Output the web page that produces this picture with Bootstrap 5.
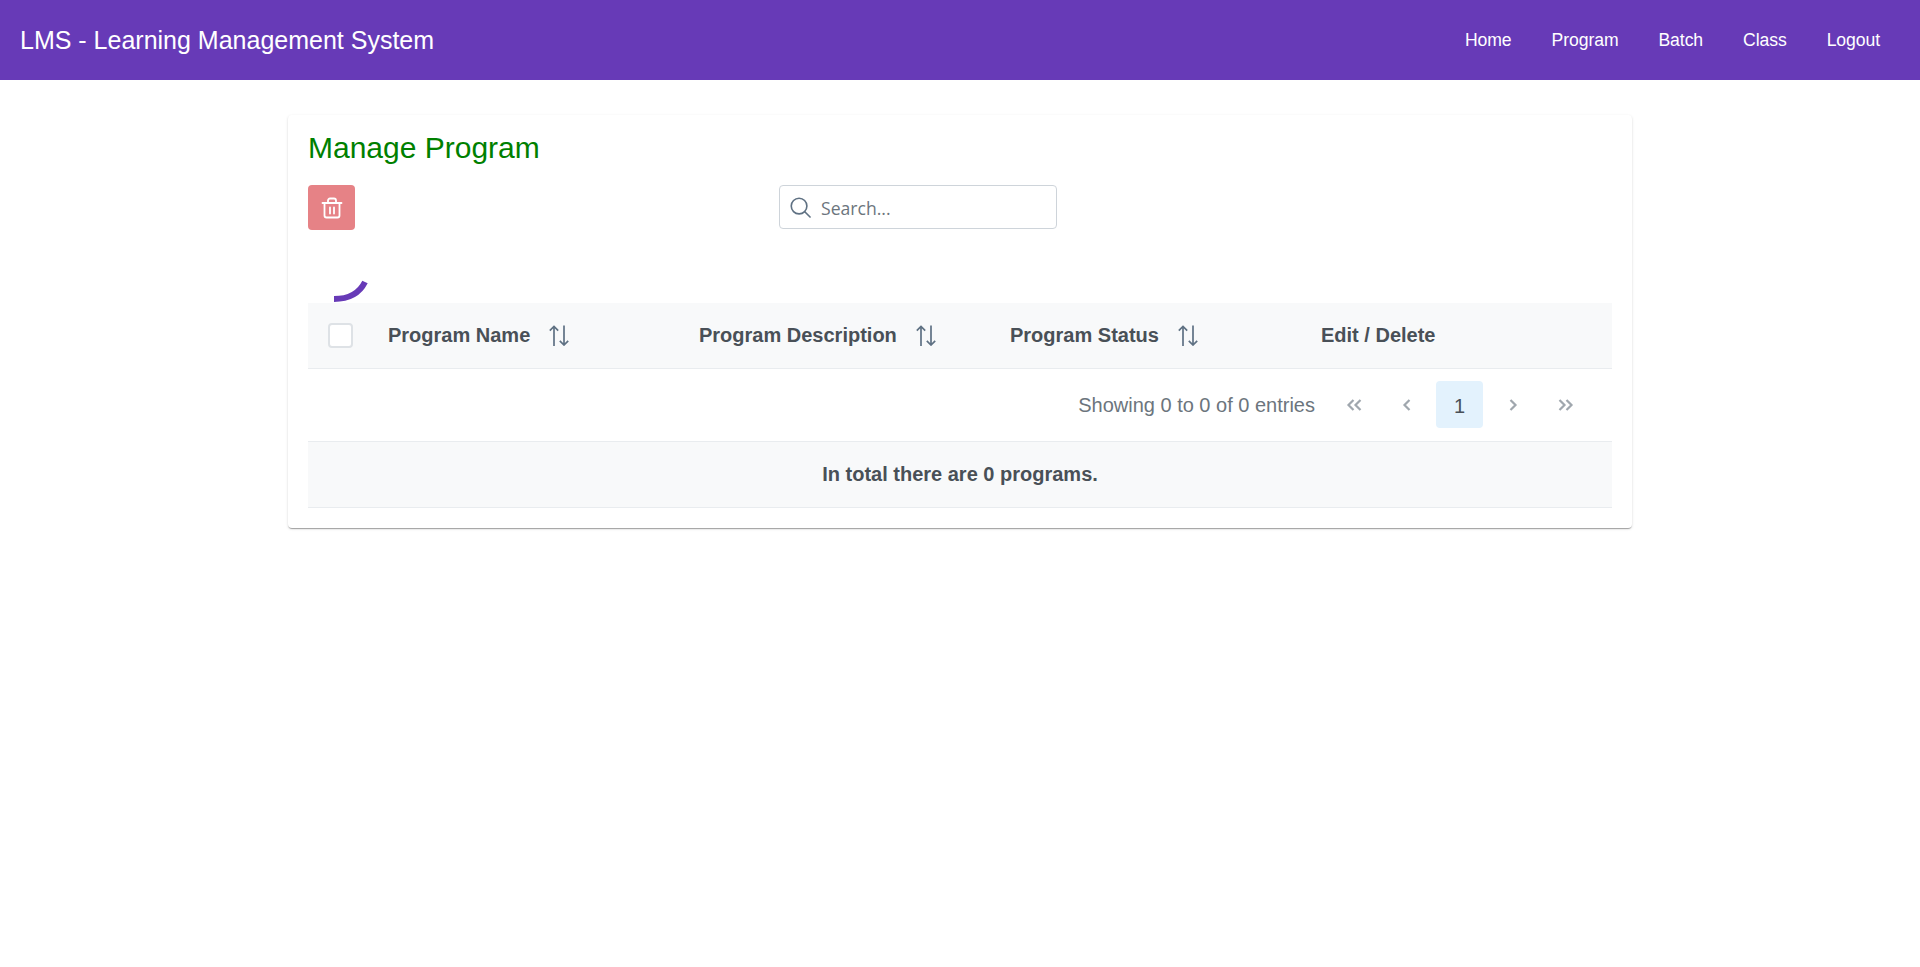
<!DOCTYPE html>
<html lang="en">
<head>
  <meta charset="UTF-8">
  <meta name="viewport" content="width=device-width, initial-scale=1.0">
  <title>LMS - Learning Management System</title>
  <link href="https://cdn.jsdelivr.net/npm/bootstrap@5.3.0/dist/css/bootstrap.min.css" rel="stylesheet">
  <style>
    body { font-family: "Liberation Sans", Arial, sans-serif; color: #495057; }
    .lms-bar { background: #673ab7; height: 80px; padding: 0 40px 0 20px; }
    .lms-brand { font-size: 25px; color: #fff; padding-top: 1px; }
    .lms-links { gap: 40px; }
    .lms-links a { color: #fff; font-size: 17.6px; text-decoration: none; letter-spacing: -0.08px; }
    .lms-panel { width: 1344px; height: 413px; margin: 35px auto 0; padding: 12px 20px; background: #fff; border-radius: 4px;
      box-shadow: 0 2px 1px -1px rgba(0,0,0,.2), 0 1px 1px 0 rgba(0,0,0,.14), 0 1px 3px 0 rgba(0,0,0,.12); position: relative; }
    .lms-title { font-size: 30px; line-height: 40px; color: green; font-weight: 400; margin: 1px 0 17px; }
    .lms-toolbar { height: 118px; align-items: flex-start; }
    .lms-delete { width: 47px; height: 45px; padding: 0; background: #e68286; border: 0; border-radius: 4px; }
    .lms-search { width: 278px; height: 44px; margin-left: 424px; border: 1px solid #ced4da; border-radius: 4px; padding: 0 10px; gap: 10px; }
    .lms-search input { border: 0; outline: 0; width: 200px; padding: 0; font-family: "Open Sans", sans-serif; font-size: 17.6px; color: #6c757d; background: none; position: relative; top: 1px; }
    .lms-search input::placeholder { color: #6c757d; opacity: 1; }
    .lms-spinner { position: absolute; left: 38px; top: 155px; }
    .lms-table { width: 1304px; table-layout: fixed; margin: 0; }
    .lms-table th { background: #f8f9fa; color: #495057; height: 65px; padding: 0; font-size: 20px; font-weight: 700; vertical-align: middle; border-bottom: 1px solid #e9ecef; box-shadow: none; }
    .lms-col-check { width: 80px; }
    .lms-col-data { width: 311px; }
    .lms-check { width: 25px; height: 25px; margin-left: 20px; border: 2px solid #dee2e6; border-radius: 4px; background: #fff; display: block; }
    .lms-sort { margin-left: 19px; vertical-align: -4px; }
    .lms-pager { height: 73px; width: 1304px; border-bottom: 1px solid #e9ecef; padding-right: 23px; gap: 6px; }
    .lms-count { font-size: 20px; color: #6c757d; margin-right: 9px; }
    .lms-page { width: 47px; height: 47px; border: 0; padding: 0; background: none; color: #a0a7ae; line-height: 0; }
    .lms-page-on { background: #e3f2fd; color: #495057; border-radius: 4px; font-size: 20px; line-height: normal; padding-top: 3px; }
    .lms-total { height: 66px; width: 1304px; background: #f8f9fa; border-bottom: 1px solid #e9ecef; font-size: 20px; font-weight: 700; }
  </style>
</head>
<body class="bg-white min-vh-100">
  <nav class="lms-bar d-flex align-items-center justify-content-between">
    <span class="lms-brand">LMS - Learning Management System</span>
    <div class="lms-links d-flex">
      <a href="#">Home</a>
      <a href="#">Program</a>
      <a href="#">Batch</a>
      <a href="#">Class</a>
      <a href="#">Logout</a>
    </div>
  </nav>

  <main class="lms-panel">
    <h1 class="lms-title">Manage Program</h1>
    <div class="lms-toolbar d-flex">
      <button class="lms-delete d-flex align-items-center justify-content-center" type="button" aria-label="Delete">
        <svg width="22" height="22" viewBox="0 0 22 22" fill="none" stroke="#fff" stroke-width="1.8" stroke-linecap="round" stroke-linejoin="round"><path d="M1.500 6h19M3.500 6v12.500a2 2 0 0 0 2 2h11a2 2 0 0 0 2-2V6M7 6V3.500a2 2 0 0 1 2-2h4a2 2 0 0 1 2 2V6M9 10.500v6M13 10.500v6"/></svg>
      </button>
      <label class="lms-search d-flex align-items-center">
        <svg width="21" height="21" viewBox="0 0 22 22" fill="none" stroke="#5f7183" stroke-width="1.7" stroke-linecap="round"><circle cx="9.500" cy="9.500" r="8.200"/><path d="M15.500 15.500l5.500 5.500"/></svg>
        <input type="text" placeholder="Search...">
      </label>
    </div>
    <svg class="lms-spinner" width="48" height="34" viewBox="0 0 48 34" fill="none" stroke="#673ab7" stroke-width="6"><path d="M8 29C22 29 33 24 39 12"/></svg>

    <table class="table lms-table">
      <thead>
        <tr>
          <th class="lms-col-check"><span class="lms-check"></span></th>
          <th class="lms-col-data">Program Name<svg class="lms-sort" width="20" height="21" viewBox="0 0 20 21" fill="none" stroke="#5f7183" stroke-width="1.700"><path d="M5 21V1.500M.8 5.700L5 1.500l4.200 4.200M15 .5V20M10.800 15.800L15 20l4.200-4.200"/></svg></th>
          <th class="lms-col-data">Program Description<svg class="lms-sort" width="20" height="21" viewBox="0 0 20 21" fill="none" stroke="#5f7183" stroke-width="1.700"><path d="M5 21V1.500M.8 5.700L5 1.500l4.200 4.200M15 .5V20M10.800 15.800L15 20l4.200-4.200"/></svg></th>
          <th class="lms-col-data">Program Status<svg class="lms-sort" width="20" height="21" viewBox="0 0 20 21" fill="none" stroke="#5f7183" stroke-width="1.700"><path d="M5 21V1.500M.8 5.700L5 1.500l4.200 4.200M15 .5V20M10.800 15.800L15 20l4.200-4.200"/></svg></th>
          <th>Edit / Delete</th>
        </tr>
      </thead>
    </table>

    <div class="lms-pager d-flex align-items-center justify-content-end">
      <span class="lms-count">Showing 0 to 0 of 0 entries</span>
      <button class="lms-page" type="button" aria-label="First page"><svg width="16" height="14" viewBox="0 0 16 14" fill="none" stroke="currentColor" stroke-width="2.200"><path d="M7.500 2L2.500 7l5 5M14.500 2L9.500 7l5 5"/></svg></button>
      <button class="lms-page" type="button" aria-label="Previous page"><svg width="10" height="14" viewBox="0 0 10 14" fill="none" stroke="currentColor" stroke-width="2.200"><path d="M7.500 2L2.500 7l5 5"/></svg></button>
      <button class="lms-page lms-page-on" type="button">1</button>
      <button class="lms-page" type="button" aria-label="Next page"><svg width="10" height="14" viewBox="0 0 10 14" fill="none" stroke="currentColor" stroke-width="2.200"><path d="M2.500 2l5 5-5 5"/></svg></button>
      <button class="lms-page" type="button" aria-label="Last page"><svg width="16" height="14" viewBox="0 0 16 14" fill="none" stroke="currentColor" stroke-width="2.200"><path d="M1.500 2l5 5-5 5M8.500 2l5 5-5 5"/></svg></button>
    </div>
    <div class="lms-total d-flex align-items-center justify-content-center">In total there are 0 programs.</div>
  </main>
  <script src="https://cdn.jsdelivr.net/npm/bootstrap@5.3.0/dist/js/bootstrap.bundle.min.js"></script>
</body>
</html>
